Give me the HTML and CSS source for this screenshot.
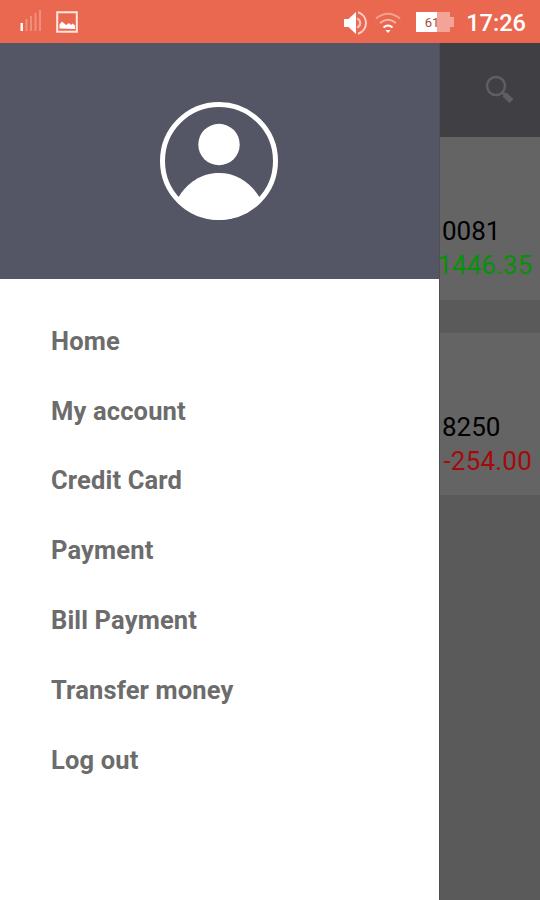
FILE: index.html
```
<!DOCTYPE html>
<html lang="en">
<head>
<meta charset="utf-8">
<title>Mobile Banking</title>
<link rel="stylesheet" href="styles.css">
</head>
<body>
<header class="status">
  <svg class="signal" width="22" height="22" viewBox="0 0 22 22" fill="#fff">
    <path d="M.5 13H3v8H.5z"/>
    <path opacity=".25" d="M5.500 9h2v12h-2zM10 6h2v15h-2zM14.500 3h2v18h-2zM19 0h2v21h-2z"/>
  </svg>
  <svg class="picture" width="22" height="22" viewBox="0 0 22 22">
    <path d="M1.200 1.200h19.600v19.600H1.200z" fill="none" stroke="#ffe6df" stroke-width="2"/>
    <path d="M3.500 17.500v-4L6 10.500l4 3.500 3-2 2 2 1.500-1.500 2.500 2v3.500z" fill="#fff"/>
  </svg>
  <svg class="sound" width="24" height="28" viewBox="0 0 24 28">
    <path d="M0 10h4.500L12 3v22l-7.500-7H0z" fill="#fff"/>
    <g fill="none" stroke="#fff"><path d="M13 9.500a4.800 4.800 0 0 1 0 9" stroke-width="2.200" opacity=".6"/><path d="M14 3.200a11.300 11.300 0 0 1 0 21.600" stroke-width="2" opacity=".7"/></g>
  </svg>
  <svg class="wifi" width="26" height="22" viewBox="0 0 26 22">
    <g fill="none" stroke="#fff" stroke-width="2"><path opacity=".38" d="M1 6.500Q13-3 25 6.500"/><path opacity=".5" d="M5 11q8-6.500 16 0"/><path d="M8.500 15.500q4.500-4 9 0"/></g>
    <path d="M10.500 18h5L13 21z" fill="#fff"/>
  </svg>
  <svg class="battery" width="38" height="20" viewBox="0 0 38 20">
    <path d="M0 0h21v20H0z" fill="#fff"/>
    <path d="M21 0h13v5h4v10h-4v5H21z" fill="#fff" opacity=".4"/>
    <text x="16" y="14.500">61</text>
  </svg>
  <time>17:26</time>
</header>
<div class="screen">
  <aside class="drawer">
    <div class="profile">
      <svg width="120" height="120" viewBox="0 0 120 120">
        <circle cx="60" cy="60" r="56.500" fill="none" stroke="#fff" stroke-width="5"/>
        <circle cx="60" cy="43.500" r="20.700" fill="#fff"/>
        <path d="M19 97C28 82 42 72 60 72s32 10 41 25c-10 13.500-24 22-41 22s-31-8.500-41-22z" fill="#fff"/>
      </svg>
    </div>
    <nav class="menu">
      <a>Home</a><a>My account</a><a>Credit Card</a><a>Payment</a><a>Bill Payment</a><a>Transfer money</a><a>Log out</a>
    </nav>
  </aside>
  <main class="content">
    <div class="toolbar">
      <svg width="30" height="30" viewBox="0 0 30 30" fill="none" stroke="#5f5f61">
        <circle cx="11" cy="11" r="9" stroke-width="2.500"/><path d="M17 17l3 3" stroke-width="3"/><path d="M19.500 19.500l7 6.500" stroke-width="5.500"/>
      </svg>
    </div>
    <section class="card"><p class="number">0081</p><p class="amount credit">1446.35</p></section>
    <section class="card"><p class="number">8250</p><p class="amount debit">-254.00</p></section>
  </main>
</div>
</body>
</html>
```
FILE: styles.css
```
* { box-sizing: border-box; }
body {
  margin: 0;
  width: 540px;
  height: 900px;
  overflow: hidden;
  display: flex;
  flex-direction: column;
  font-family: Roboto, "Liberation Sans", sans-serif;
  background: #5a5a5a;
}
svg { display: block; flex: none; }
.status {
  height: 43px;
  flex: none;
  display: flex;
  align-items: center;
  padding: 0 14px 0 20px;
  background: #eb6850;
  color: #fff;
}
.signal { margin-top: -2px; }
.picture { margin-left: 14px; }
.sound { margin-left: 266px; margin-top: 2px; }
.wifi { margin-left: 7px; margin-top: 2px; }
.battery { margin-left: 15px; }
.battery text { font-size: 13px; fill: #a6493b; text-anchor: middle; }
.status time {
  margin-left: auto;
  margin-top: 2px;
  font-size: 23.6px;
  font-weight: 500;
  line-height: 30px;
}
.screen { flex: 1; display: flex; min-height: 0; }
.drawer {
  width: 439px;
  flex: none;
  background: #fff;
}
.profile {
  height: 236px;
  display: flex;
  align-items: center;
  justify-content: center;
  padding-right: 1px;
  background: #545665;
}
.menu { padding: 26.9px 0 0 51px; }
.menu a {
  display: block;
  height: 69.8px;
  line-height: 70px;
  font-size: 25.5px;
  font-weight: 700;
  letter-spacing: 0.15px;
  color: #6c6c6c;
}
.content {
  flex: 1;
  min-width: 0;
  background: #5a5a5a;
  border-left: 1px solid #505052;
}
.toolbar {
  height: 94px;
  display: flex;
  align-items: center;
  justify-content: flex-end;
  padding-right: 25px;
  background: #404044;
}
.card {
  height: 163px;
  margin-bottom: 33px;
  padding-top: 77px;
  background: #646464;
}
.card:last-child { height: 162px; }
.card p {
  margin: 0;
  height: 34px;
  line-height: 34px;
  font-size: 26px;
  white-space: nowrap;
}
.number { padding-left: 2px; color: #000; }
.amount { display: flex; justify-content: flex-end; padding-right: 8px; }
.credit { color: #079107; }
.debit { color: #a30b0b; letter-spacing: 0.2px; }
```
